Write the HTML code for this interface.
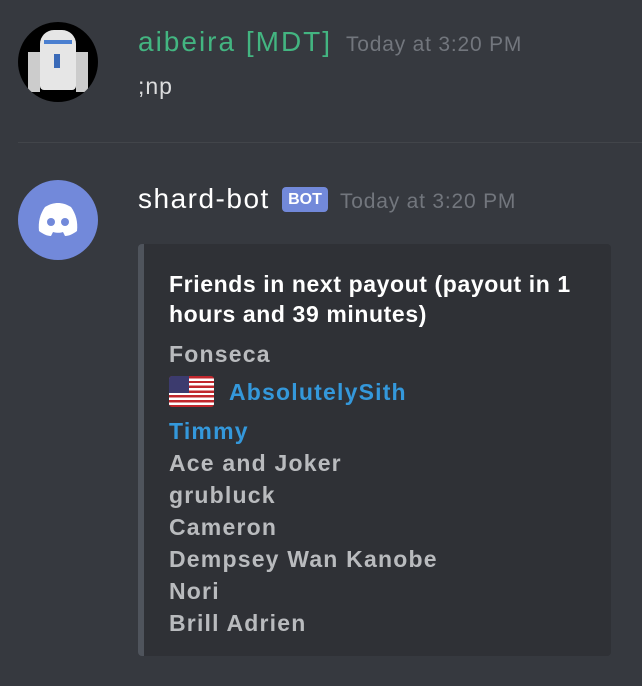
<!DOCTYPE html>
<html><head><style>
body{margin:0;width:642px;height:686px;background:#36393f;font-family:"Liberation Sans",sans-serif;overflow:hidden;position:relative}
.a{position:absolute;white-space:nowrap}
.av{position:absolute;left:18px;width:80px;height:80px;border-radius:50%}
.l{position:absolute;left:169px;font-weight:bold;font-size:23px;color:#b9bbbe;letter-spacing:1.2px;white-space:nowrap}
</style></head><body>
<div class="av" style="top:22px;background:#000;overflow:hidden">
<div class="a" style="left:22px;top:8px;width:36px;height:60px;background:#e6e6e6;border-radius:14px 14px 4px 4px"></div>
<div class="a" style="left:26px;top:18px;width:28px;height:4px;background:#4a7fd0"></div>
<div class="a" style="left:36px;top:32px;width:6px;height:14px;background:#3a6ab8"></div>
<div class="a" style="left:10px;top:30px;width:12px;height:40px;background:#ccc"></div>
<div class="a" style="left:58px;top:30px;width:12px;height:40px;background:#ccc"></div>
</div>
<div class="a" style="left:138px;top:26px;font-size:28px;letter-spacing:2px;color:#43b581">aibeira [MDT]</div>
<div class="a" style="left:346px;top:33px;font-size:21px;letter-spacing:0.8px;color:#72767d">Today at 3:20 PM</div>
<div class="a" style="left:138px;top:73px;font-size:23px;letter-spacing:1px;color:#dcddde">;np</div>
<div class="a" style="left:18px;top:142px;width:624px;height:1px;background:#42454a"></div>
<div class="av" style="top:180px;background:#7289da">
<svg width="80" height="80" viewBox="0 0 80 80"><path d="M27 27c5-3 9-4 13-4s8 1 13 4c5 7 7 15 6 24-4 3-8 5-12 5l-2-4c-3 1-6 1-10 0l-2 4c-4 0-8-2-12-5-1-9 1-17 6-24z" fill="#fff"/><circle cx="33" cy="42" r="4" fill="#7289da"/><circle cx="47" cy="42" r="4" fill="#7289da"/></svg>
</div>
<div class="a" style="left:138px;top:183px;font-size:28px;letter-spacing:1.5px;color:#fff">shard-bot</div>
<div class="a" style="left:282px;top:187px;width:46px;height:25px;background:#7289da;border-radius:4px;color:#fff;font-size:16px;font-weight:bold;text-align:center;line-height:25px">BOT</div>
<div class="a" style="left:340px;top:190px;font-size:21px;letter-spacing:0.8px;color:#72767d">Today at 3:20 PM</div>
<div class="a" style="left:138px;top:244px;width:473px;height:412px;background:#2f3136;border-left:6px solid #4f545c;border-radius:4px;box-sizing:border-box"></div>
<div class="a" style="left:169px;top:269px;width:420px;white-space:normal;font-size:23px;font-weight:bold;color:#fff;line-height:30px;letter-spacing:0.6px">Friends in next payout (payout in 1 hours and 39 minutes)</div>
<div class="l" style="top:341px">Fonseca</div>
<div class="a" style="left:169px;top:376px;width:45px;height:31px;border-radius:3px;overflow:hidden;background:repeating-linear-gradient(#c1272d 0 2.4px,#fff 2.4px 4.8px)"><div style="width:20px;height:17px;background:#3c3b6e"></div></div>
<div class="l" style="top:379px;left:229px;color:#3498db">AbsolutelySith</div>
<div class="l" style="top:418px;color:#3498db">Timmy</div>
<div class="l" style="top:450px">Ace and Joker</div>
<div class="l" style="top:482px">grubluck</div>
<div class="l" style="top:514px">Cameron</div>
<div class="l" style="top:546px">Dempsey Wan Kanobe</div>
<div class="l" style="top:578px">Nori</div>
<div class="l" style="top:610px">Brill Adrien</div>
</body></html>
